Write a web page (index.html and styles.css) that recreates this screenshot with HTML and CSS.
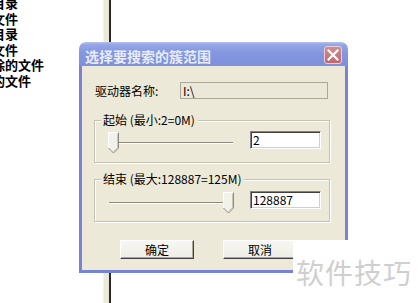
FILE: index.html
```html
<!DOCTYPE html>
<html lang="zh-CN">
<head>
<meta charset="utf-8">
<title>选择要搜索的簇范围</title>
<link rel="stylesheet" href="styles.css">
</head>
<body>
<div class="screen">
  <div class="pane">
    <ul class="pane-list">
      <li>目录</li>
      <li>文件</li>
      <li>目录</li>
      <li>文件</li>
      <li>除的文件</li>
      <li>的文件</li>
    </ul>
  </div>
  <div class="divider"></div>
  <div class="rest"></div>
</div>

<div class="dialog">
  <div class="titlebar">
    <span class="title">选择要搜索的簇范围</span>
    <div class="close">
      <svg width="12" height="12" viewBox="0 0 12 12"><path d="M1.5 1.5 L10.5 10.5 M10.5 1.5 L1.5 10.5" stroke="#fff" stroke-width="2.2" stroke-linecap="square"/></svg>
    </div>
  </div>
  <div class="dbody">
    <div class="drive-row">
      <span class="lbl">驱动器名称:</span>
      <div class="field">I:\</div>
    </div>

    <fieldset class="group">
      <legend>起始 (最小:2=0M)</legend>
      <div class="row">
        <div class="slider">
          <div class="track"></div>
          <svg class="thumb" style="margin-left:0px" width="11" height="22" viewBox="0 0 11 22">
            <path d="M0.5 0.5 H10.5 V16 L5.5 21 L0.5 16 Z" fill="#F2F1EA"/>
            <path d="M0.5 16 V0.5 H10" fill="none" stroke="#fff"/>
            <path d="M10.5 0.5 V16 L5.5 21 L0.5 16" fill="none" stroke="#8E8C80"/>
            <path d="M9.5 1.5 V15.5 L5.5 19.5" fill="none" stroke="#C9C6B6"/>
          </svg>
        </div>
        <div class="edit">2</div>
      </div>
    </fieldset>

    <fieldset class="group g2">
      <legend>结束 (最大:128887=125M)</legend>
      <div class="row">
        <div class="slider">
          <div class="track"></div>
          <svg class="thumb" style="margin-left:115px" width="11" height="22" viewBox="0 0 11 22">
            <path d="M0.5 0.5 H10.5 V16 L5.5 21 L0.5 16 Z" fill="#F2F1EA"/>
            <path d="M0.5 16 V0.5 H10" fill="none" stroke="#fff"/>
            <path d="M10.5 0.5 V16 L5.5 21 L0.5 16" fill="none" stroke="#8E8C80"/>
            <path d="M9.5 1.5 V15.5 L5.5 19.5" fill="none" stroke="#C9C6B6"/>
          </svg>
        </div>
        <div class="edit">128887</div>
      </div>
    </fieldset>

    <div class="buttons">
      <button class="btn">确定</button>
      <button class="btn">取消</button>
    </div>
  </div>
</div>

<div class="watermark">软件技巧</div>
</body>
</html>
```

FILE: styles.css
```css
html, body {
  margin: 0;
  padding: 0;
  background: #fff;
  width: 418px;
  height: 303px;
  overflow: hidden;
  font-family: "Noto Sans CJK SC", "Liberation Sans", sans-serif;
}

.screen {
  display: flex;
  height: 303px;
}

.pane {
  width: 103px;
  overflow: hidden;
  background: #fff;
}

.pane-list {
  list-style: none;
  margin: -5px 0 0 -8px;
  padding: 0;
  font-size: 13px;
  font-weight: bold;
  line-height: 15.5px;
  color: #000;
  white-space: nowrap;
}

.divider {
  width: 5px;
  background: #ECE9D8;
  border-left: 1px solid #F4F3EE;
  border-right: 2px solid #2a2a2a;
}

.rest {
  flex: 1;
  background: #fff;
}

/* dialog window */
.dialog {
  position: absolute;
  left: 79px;
  top: 42px;
  width: 269px;
}

.titlebar {
  height: 24px;
  border-radius: 7px 7px 0 0;
  background: linear-gradient(#B3C1EE 0%, #93A5E5 12%, #8396DE 50%, #7D90DA 100%);
  display: flex;
  align-items: center;
  padding: 2px 6px 0 6px;
  box-sizing: border-box;
}

.title {
  flex: 1;
  color: #E6ECFA;
  font-size: 14px;
  font-weight: bold;
  line-height: 16px;
  letter-spacing: 0;
  padding-top: 2px;
}

.close {
  width: 18px;
  height: 18px;
  box-sizing: border-box;
  border: 1px solid #E9CFD3;
  border-radius: 3px;
  background: linear-gradient(#D08E92, #C1676D);
  display: flex;
  align-items: center;
  justify-content: center;
}

.dbody {
  background: #ECE9D8;
  border: 3px solid #7884D2;
  border-top: none;
  height: 204px;
  box-sizing: content-box;
  font-size: 12px;
  color: #000;
  display: flex;
  flex-direction: column;
}

.drive-row {
  display: flex;
  align-items: center;
  margin-top: 16px;
  padding-left: 13px;
}

.lbl {
  width: 85px;
  line-height: 17px;
}

.field {
  width: 148px;
  height: 17px;
  box-sizing: border-box;
  border: 1px solid #ACA899;
  background: #EBE8D9;
  padding-left: 2px;
  line-height: 15px;
  font-size: 12px;
}

.group {
  margin: 15px 0 0 12px;
  width: 236px;
  box-sizing: border-box;
  border: 1px solid #C5C2B2;
  box-shadow: inset 1px 1px 0 #fff, 1px 1px 0 #fff;
  padding: 5px 0 8px 13px;
  min-width: 0;
}

.group.g2 {
  margin-top: 10px;
  padding-top: 6px;
  padding-bottom: 7px;
}

.group legend {
  padding: 0 3px 0 2px;
  margin-left: -7px;
  line-height: 12px;
  font-size: 12px;
  background: #ECE9D8;
}

.row {
  display: flex;
  align-items: flex-start;
}

.slider {
  position: relative;
  width: 126px;
  height: 22px;
  margin-top: 1px;
  display: flex;
}

.track {
  position: absolute;
  left: 1px;
  right: 1px;
  top: 10px;
  height: 0;
  border-top: 1px solid #8E8C80;
  border-bottom: 1px solid #fff;
}

.thumb {
  position: relative;
  display: block;
}

.edit {
  margin-left: 16px;
  width: 71px;
  height: 18px;
  box-sizing: border-box;
  background: #fff;
  border: 1px solid;
  border-color: #848284 #fff #fff #848284;
  box-shadow: inset 1px 1px 0 #404040, inset -1px -1px 0 #D4D0C8;
  padding-left: 2px;
  line-height: 15px;
  font-size: 12px;
}

.buttons {
  display: flex;
  gap: 29px;
  margin-top: 18px;
  padding-left: 38px;
}

.btn {
  width: 74px;
  height: 19px;
  box-sizing: border-box;
  padding: 0;
  margin: 0;
  font-family: "Noto Sans CJK SC", sans-serif;
  font-size: 12px;
  line-height: 15px;
  color: #000;
  background: linear-gradient(#F7F6F1, #EEEDE6);
  border: 1px solid;
  border-color: #fff #404040 #404040 #fff;
  box-shadow: inset -1px -1px 0 #ACA899;
}

.watermark {
  position: absolute;
  left: 293px;
  top: 240px;
  width: 125px;
  height: 63px;
  background: #fff;
  color: #CFCFCF;
  font-size: 28px;
  line-height: 30px;
  padding: 17px 0 0 3px;
  box-sizing: border-box;
  letter-spacing: 1px;
  white-space: nowrap;
}
```
